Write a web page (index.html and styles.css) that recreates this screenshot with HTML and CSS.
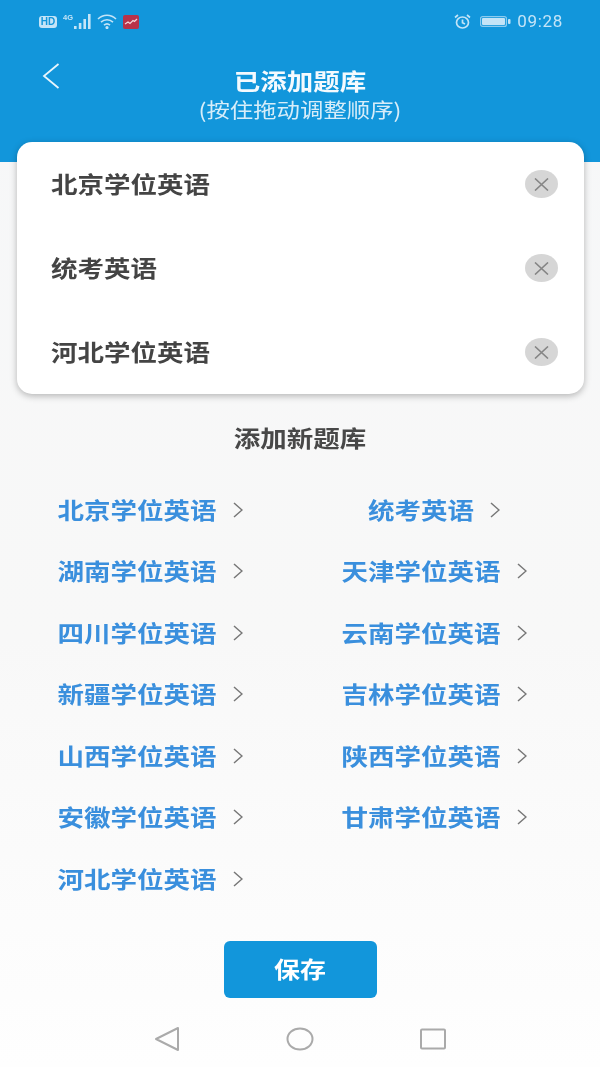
FILE: index.html
```html
<!DOCTYPE html>
<html lang="zh-CN">
<head>
<meta charset="utf-8">
<title>已添加题库</title>
<link rel="stylesheet" href="styles.css">
</head>
<body>
<div class="page">
  <header class="header">
    <div class="status">
      <div class="status-left">
        <span class="hd">HD</span>
        <span class="net">4G</span>
        <svg class="signal" width="18" height="15" viewBox="0 0 18 15"><path d="M1 12h2.600v3H1zM5.800 9h2.600v6H5.800zM10.400 5H13v10h-2.600zM15 0h2.600v15H15z" fill="#c4e4f7"/></svg>
        <svg class="wifi" width="20" height="15" viewBox="0 0 20 15" fill="none" stroke="#c4e4f7" stroke-width="1.600"><path d="M1 5c5-5 13-5 18 0M4 8.200c3.400-3.200 8.600-3.200 12 0M7 11.200c1.800-1.600 4.200-1.600 6 0"/><circle cx="10" cy="13.600" r=".8" fill="#c4e4f7"/></svg>
        <svg class="app" width="16" height="14" viewBox="0 0 16 14"><rect width="16" height="14" rx="2" fill="#b8324a"/><path d="M2 9l3-2 2 1.500 3-3 1.500 1L14 4" fill="none" stroke="#f4d5da" stroke-width="1.300"/></svg>
      </div>
      <div class="status-right">
        <svg class="alarm" width="17" height="15" viewBox="0 0 17 15" fill="none" stroke="#c4e4f7" stroke-width="1.700"><ellipse cx="8.500" cy="8.500" rx="6" ry="5.500"/><path d="M8.500 5.500v3.300l2.500 1.200M1 3.500L4 1M16 3.500L13 1"/></svg>
        <svg class="battery" width="31" height="11" viewBox="0 0 31 11"><rect x=".6" y=".6" width="25.800" height="9.800" rx="2" fill="none" stroke="#8ccbef" stroke-width="1.200"/><rect x="2" y="2" width="23" height="7" rx="1" fill="#c4e4f7"/><rect x="28" y="3" width="2.500" height="5" rx="1" fill="#c4e4f7"/></svg>
        <span class="time">09:28</span>
      </div>
    </div>
    <div class="titlebar">
      <svg class="back" width="18" height="26" viewBox="0 0 18 26" fill="none" stroke="#e8f5fc" stroke-width="1.800"><path d="M16.500 1L2 13l14.500 12"/></svg>
      <div class="titles">
        <h1 class="title"><span class="squash">已添加题库</span></h1>
        <p class="subtitle"><span class="squash">(按住拖动调整顺序)</span></p>
      </div>
    </div>
  </header>

  <main class="main">
    <section class="card">
      <div class="row"><span class="squash row-name">北京学位英语</span><span class="remove"><svg width="15" height="13" viewBox="0 0 15 13" fill="none" stroke="#858585" stroke-width="1.600"><path d="M1 .5l13 12M14 .5L1 12.500"/></svg></span></div>
      <div class="row"><span class="squash row-name">统考英语</span><span class="remove"><svg width="15" height="13" viewBox="0 0 15 13" fill="none" stroke="#858585" stroke-width="1.600"><path d="M1 .5l13 12M14 .5L1 12.500"/></svg></span></div>
      <div class="row"><span class="squash row-name">河北学位英语</span><span class="remove"><svg width="15" height="13" viewBox="0 0 15 13" fill="none" stroke="#858585" stroke-width="1.600"><path d="M1 .5l13 12M14 .5L1 12.500"/></svg></span></div>
    </section>

    <h2 class="add-title"><span class="squash">添加新题库</span></h2>

    <section class="bank-grid">
      <a class="bank"><span class="squash">北京学位英语</span><svg class="chev" width="10" height="16" viewBox="0 0 10 16"><path d="M1 1l8 7-8 7"/></svg></a>
      <a class="bank"><span class="squash">统考英语</span><svg class="chev" width="10" height="16" viewBox="0 0 10 16"><path d="M1 1l8 7-8 7"/></svg></a>
      <a class="bank"><span class="squash">湖南学位英语</span><svg class="chev" width="10" height="16" viewBox="0 0 10 16"><path d="M1 1l8 7-8 7"/></svg></a>
      <a class="bank"><span class="squash">天津学位英语</span><svg class="chev" width="10" height="16" viewBox="0 0 10 16"><path d="M1 1l8 7-8 7"/></svg></a>
      <a class="bank"><span class="squash">四川学位英语</span><svg class="chev" width="10" height="16" viewBox="0 0 10 16"><path d="M1 1l8 7-8 7"/></svg></a>
      <a class="bank"><span class="squash">云南学位英语</span><svg class="chev" width="10" height="16" viewBox="0 0 10 16"><path d="M1 1l8 7-8 7"/></svg></a>
      <a class="bank"><span class="squash">新疆学位英语</span><svg class="chev" width="10" height="16" viewBox="0 0 10 16"><path d="M1 1l8 7-8 7"/></svg></a>
      <a class="bank"><span class="squash">吉林学位英语</span><svg class="chev" width="10" height="16" viewBox="0 0 10 16"><path d="M1 1l8 7-8 7"/></svg></a>
      <a class="bank"><span class="squash">山西学位英语</span><svg class="chev" width="10" height="16" viewBox="0 0 10 16"><path d="M1 1l8 7-8 7"/></svg></a>
      <a class="bank"><span class="squash">陕西学位英语</span><svg class="chev" width="10" height="16" viewBox="0 0 10 16"><path d="M1 1l8 7-8 7"/></svg></a>
      <a class="bank"><span class="squash">安徽学位英语</span><svg class="chev" width="10" height="16" viewBox="0 0 10 16"><path d="M1 1l8 7-8 7"/></svg></a>
      <a class="bank"><span class="squash">甘肃学位英语</span><svg class="chev" width="10" height="16" viewBox="0 0 10 16"><path d="M1 1l8 7-8 7"/></svg></a>
      <a class="bank"><span class="squash">河北学位英语</span><svg class="chev" width="10" height="16" viewBox="0 0 10 16"><path d="M1 1l8 7-8 7"/></svg></a>
    </section>

    <button class="save"><span class="squash">保存</span></button>
  </main>

  <nav class="sysnav">
    <svg width="28" height="26" viewBox="0 0 28 26" fill="none" stroke="#aaaaaa" stroke-width="2" stroke-linejoin="round"><path d="M25 2v22L3 13z"/></svg>
    <svg width="28" height="24" viewBox="0 0 28 24" fill="none" stroke="#aaaaaa" stroke-width="2"><ellipse cx="14" cy="12" rx="12.500" ry="10.500"/></svg>
    <svg width="28" height="22" viewBox="0 0 28 22" fill="none" stroke="#aaaaaa" stroke-width="2"><rect x="2" y="1.500" width="24" height="19" rx="1"/></svg>
  </nav>
</div>
</body>
</html>
```

FILE: styles.css
```css
* { box-sizing: border-box; }
html, body { margin: 0; padding: 0; }
body {
  width: 600px;
  height: 1067px;
  overflow: hidden;
  font-family: "Noto Sans CJK SC", "Noto Sans", sans-serif;
}
.page {
  width: 600px;
  height: 1067px;
  display: flex;
  flex-direction: column;
  background: linear-gradient(#f6f7f8 0, #f8f8f8 60%, #fefefe 100%);
  filter: blur(0.45px);
}
.squash {
  display: inline-block;
  transform: scaleY(0.86);
}
.header {
  height: 162px;
  flex: none;
  background: #1296db;
  color: #fff;
}
.status {
  height: 42px;
  padding: 14px 37px 0 39px;
  display: flex;
  justify-content: space-between;
  align-items: flex-start;
}
.status-left, .status-right { display: flex; align-items: center; height: 15px; }
.hd {
  width: 18px;
  height: 12px;
  border-radius: 3px;
  background: #c4e4f7;
  color: #1296db;
  font: 700 10px/12px "Liberation Sans", sans-serif;
  text-align: center;
}
.net {
  width: 10px;
  margin-left: 6px;
  align-self: flex-start;
  color: #c4e4f7;
  font: 700 7.500px/8px "Liberation Sans", sans-serif;
}
.wifi { margin-left: 6px; }
.app { margin-left: 6px; }
.alarm { margin-right: 9px; }
.battery { margin-right: 6px; }
.time {
  color: #c4e4f7;
  font: 400 17px/15px "Roboto", "Liberation Sans", sans-serif;
  letter-spacing: .7px;
}
.titlebar {
  display: grid;
  grid-template-columns: 42px 18px 1fr 60px;
  height: 78px;
  padding-top: 21px;
}
.back { grid-column: 2; }
.titles {
  grid-column: 3;
  text-align: center;
  margin-top: 2px;
}
.title {
  margin: 0;
  font-size: 26.500px;
  font-weight: 700;
  line-height: 32px;
  color: #f4fafe;
}
.subtitle {
  margin: -2px 0 0;
  font-size: 23.400px;
  font-weight: 400;
  line-height: 28px;
  color: #d7edf9;
}
.main {
  flex: 1;
  display: flex;
  flex-direction: column;
  align-items: stretch;
}
.card {
  margin: -20px 16px 0 17px;
  height: 252px;
  flex: none;
  background: #fff;
  border-radius: 15px;
  box-shadow: 0 2px 7px rgba(0, 0, 0, .28);
}
.row {
  height: 84px;
  padding: 0 26px 0 34px;
  display: flex;
  justify-content: space-between;
  align-items: center;
}
.row-name {
  font-size: 26.500px;
  font-weight: 700;
  line-height: 32px;
  color: #444;
}
.remove {
  width: 33px;
  height: 28px;
  border-radius: 50%;
  background: #d6d6d6;
  display: flex;
  align-items: center;
  justify-content: center;
}
.add-title {
  margin: 24px 0 0;
  text-align: center;
  font-size: 26.500px;
  font-weight: 700;
  line-height: 40px;
  color: #484848;
}
.bank-grid {
  margin-top: 21px;
  padding: 0 24px 0 8px;
  display: grid;
  grid-template-columns: 1fr 1fr;
  grid-auto-rows: 61.500px;
}
.bank {
  display: flex;
  align-items: center;
  justify-content: center;
  gap: 16px;
  font-size: 26.500px;
  font-weight: 700;
  line-height: 32px;
  color: #3a8fdd;
}
.chev { fill: none; stroke: #777; stroke-width: 1.500; }
.save {
  align-self: center;
  margin-top: 31px;
  width: 153px;
  height: 57px;
  padding: 0;
  border: 0;
  border-radius: 6px;
  background: #1296db;
  color: #fff;
  font-family: inherit;
  font-size: 26px;
  font-weight: 700;
  line-height: 32px;
}
.sysnav {
  height: 56px;
  flex: none;
  display: flex;
  justify-content: center;
  align-items: center;
  gap: 105px;
}
```
